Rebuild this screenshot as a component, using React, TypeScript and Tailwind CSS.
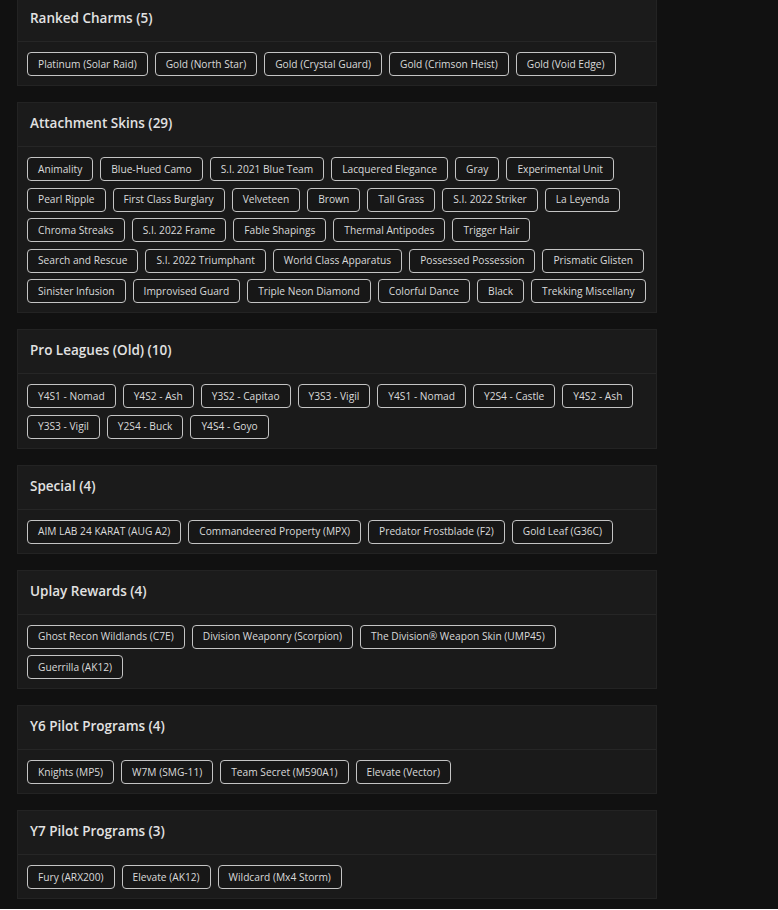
const sections: { title: string; rows: string[][] }[] = [
  {
    title: "Ranked Charms (5)",
    rows: [
      [
        "Platinum (Solar Raid)",
        "Gold (North Star)",
        "Gold (Crystal Guard)",
        "Gold (Crimson Heist)",
        "Gold (Void Edge)",
      ],
    ],
  },
  {
    title: "Attachment Skins (29)",
    rows: [
      ["Animality", "Blue-Hued Camo", "S.I. 2021 Blue Team", "Lacquered Elegance", "Gray", "Experimental Unit"],
      ["Pearl Ripple", "First Class Burglary", "Velveteen", "Brown", "Tall Grass", "S.I. 2022 Striker", "La Leyenda"],
      ["Chroma Streaks", "S.I. 2022 Frame", "Fable Shapings", "Thermal Antipodes", "Trigger Hair"],
      ["Search and Rescue", "S.I. 2022 Triumphant", "World Class Apparatus", "Possessed Possession", "Prismatic Glisten"],
      ["Sinister Infusion", "Improvised Guard", "Triple Neon Diamond", "Colorful Dance", "Black", "Trekking Miscellany"],
    ],
  },
  {
    title: "Pro Leagues (Old) (10)",
    rows: [
      ["Y4S1 - Nomad", "Y4S2 - Ash", "Y3S2 - Capitao", "Y3S3 - Vigil", "Y4S1 - Nomad", "Y2S4 - Castle", "Y4S2 - Ash"],
      ["Y3S3 - Vigil", "Y2S4 - Buck", "Y4S4 - Goyo"],
    ],
  },
  {
    title: "Special (4)",
    rows: [
      ["AIM LAB 24 KARAT (AUG A2)", "Commandeered Property (MPX)", "Predator Frostblade (F2)", "Gold Leaf (G36C)"],
    ],
  },
  {
    title: "Uplay Rewards (4)",
    rows: [
      ["Ghost Recon Wildlands (C7E)", "Division Weaponry (Scorpion)", "The Division® Weapon Skin (UMP45)"],
      ["Guerrilla (AK12)"],
    ],
  },
  {
    title: "Y6 Pilot Programs (4)",
    rows: [["Knights (MP5)", "W7M (SMG-11)", "Team Secret (M590A1)", "Elevate (Vector)"]],
  },
  {
    title: "Y7 Pilot Programs (3)",
    rows: [["Fury (ARX200)", "Elevate (AK12)", "Wildcard (Mx4 Storm)"]],
  },
];

function Chip({ label }: { label: string }) {
  return (
    <span className="inline-flex h-[24px] shrink-0 items-center whitespace-nowrap rounded-[4px] border border-[#c4c4c4] bg-[#171717] px-[10px] text-[10.2px] leading-none text-[#dadada]">
      {label}
    </span>
  );
}

function Section({ title, rows }: { title: string; rows: string[][] }) {
  return (
    <section className="w-[640px] border border-[#232323] bg-[#1a1a1a]">
      <div className="flex h-[44px] items-center border-b border-[#262626] bg-[#1b1b1b] px-[12px] pb-[2px]">
        <h2 className="text-[13.5px] font-semibold text-[#e2e2e2]">{title}</h2>
      </div>
      <div className="flex flex-col gap-y-[6.5px] px-[9px] pt-[10px] pb-[9px]">
        {rows.map((row, r) => (
          <div key={r} className="flex gap-x-[7px]">
            {row.map((it, i) => (
              <Chip key={i} label={it} />
            ))}
          </div>
        ))}
      </div>
    </section>
  );
}

export default function App() {
  return (
    <div
      className="min-h-screen bg-[#111111] pl-[17px]"
      style={{ fontFamily: '"Open Sans", "Noto Sans", sans-serif' }}
    >
      <div className="-mt-[3px] flex flex-col gap-[16px] pb-[10px]">
        {sections.map((s) => (
          <Section key={s.title} title={s.title} rows={s.rows} />
        ))}
      </div>
    </div>
  );
}
